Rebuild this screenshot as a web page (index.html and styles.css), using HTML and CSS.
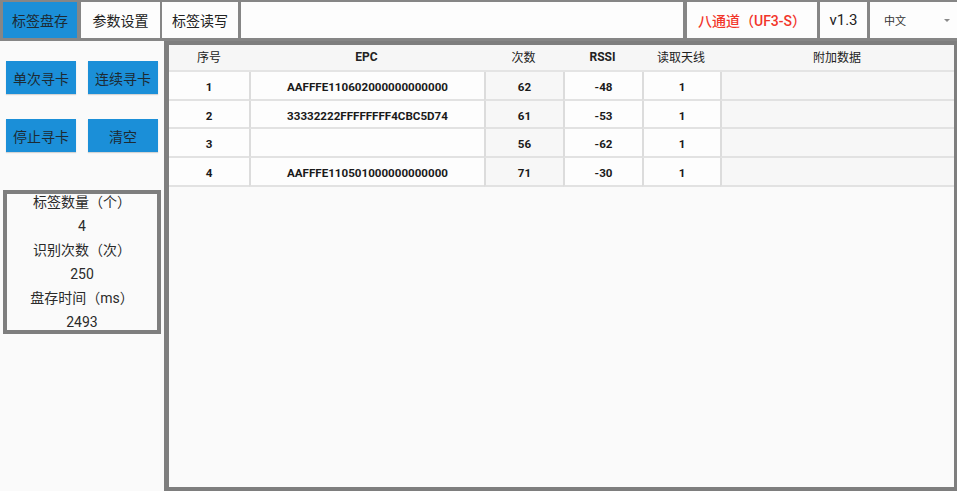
FILE: index.html
```html
<!DOCTYPE html>
<html lang="zh">
<head>
<meta charset="utf-8">
<link rel="stylesheet" href="styles.css">
</head>
<body>
<div class="topbar">
  <div class="tab tab-active t1">标签盘存</div>
  <div class="tab t2">参数设置</div>
  <div class="tab t3">标签读写</div>
  <div class="tab blank"></div>
  <div class="tab chan">八通道（UF3-S）</div>
  <div class="tab ver">v1.3</div>
  <div class="tab lang"><span class="lang-text">中文</span><span class="caret"></span></div>
</div>
<div class="main">
  <div class="side">
    <div class="btns">
      <div class="btn">单次寻卡</div>
      <div class="btn">连续寻卡</div>
      <div class="btn">停止寻卡</div>
      <div class="btn">清空</div>
    </div>
    <div class="stats">
      <div class="stats-inner">
        <div class="line">标签数量（个）</div>
        <div class="line num">4</div>
        <div class="line">识别次数（次）</div>
        <div class="line num">250</div>
        <div class="line">盘存时间（ms）</div>
        <div class="line num">2493</div>
      </div>
    </div>
  </div>
  <div class="tablebox">
    <div class="grid">
      <div class="h">序号</div>
      <div class="h b">EPC</div>
      <div class="h">次数</div>
      <div class="h b">RSSI</div>
      <div class="h">读取天线</div>
      <div class="h">附加数据</div>

      <div class="c">1</div><div class="c s">AAFFFE110602000000000000</div><div class="c s g">62</div><div class="c s">-48</div><div class="c s">1</div><div class="c s g"></div>
      <div class="c">2</div><div class="c s">33332222FFFFFFFF4CBC5D74</div><div class="c s g">61</div><div class="c s">-53</div><div class="c s">1</div><div class="c s g"></div>
      <div class="c">3</div><div class="c s"></div><div class="c s g">56</div><div class="c s">-62</div><div class="c s">1</div><div class="c s g"></div>
      <div class="c">4</div><div class="c s">AAFFFE110501000000000000</div><div class="c s g">71</div><div class="c s">-30</div><div class="c s">1</div><div class="c s g"></div>
    </div>
  </div>
</div>
</body>
</html>
```
FILE: styles.css
```css
* { box-sizing: border-box; }
html, body { margin: 0; padding: 0; }
body {
  width: 957px;
  height: 491px;
  overflow: hidden;
  background: #fafafa;
  font-family: Roboto, "Noto Sans CJK SC", sans-serif;
  color: #222;
}
.topbar {
  display: flex;
  height: 41px;
  padding-top: 2px;
  padding-bottom: 3px;
  background: #868686;
}
.tab {
  background: #fdfdfd;
  display: flex;
  align-items: center;
  justify-content: center;
  font-size: 14px;
  font-family: "Noto Sans CJK SC", sans-serif;
  color: #222;
}
.tab-active { background: #1b8fd8; color: #1d2a33; }
.t1 { margin-left: 3px; width: 74px; }
.t2 { margin-left: 4px; width: 79px; }
.t3 { margin-left: 2px; width: 76px; }
.blank { margin-left: 3px; flex: 1; }
.chan { margin-left: 4px; width: 130px; color: #f2352a; font-weight: 500; font-family: Roboto, "Noto Sans CJK SC", sans-serif; }
.ver { margin-left: 3px; width: 47px; font-family: Roboto, sans-serif; font-size: 15px; }
.lang { margin-left: 3px; width: 87px; justify-content: flex-start; padding-left: 14px; }
.lang-text { font-size: 11px; color: #333; }
.caret {
  margin-left: 38px;
  width: 0; height: 0;
  border-left: 3px solid transparent;
  border-right: 3px solid transparent;
  border-top: 3px solid #8a8a8a;
}
.main {
  display: flex;
  height: 450px;
}
.side {
  width: 164px;
  flex: none;
  background: #fafafa;
  padding-top: 20px;
}
.btns {
  display: grid;
  grid-template-columns: 70px 70px;
  column-gap: 12px;
  row-gap: 25px;
  padding-left: 6px;
}
.btn {
  height: 33px;
  background: #1b8fd8;
  color: #1d2a33;
  font-family: "Noto Sans CJK SC", sans-serif;
  font-size: 14px;
  display: flex;
  align-items: center;
  justify-content: center;
  box-shadow: 0 1px 1px rgba(0,0,0,0.15);
}
.stats {
  margin: 38px 0 0 3px;
  width: 158px;
  height: 144px;
  border: 4px solid #7e7e7e;
  overflow: hidden;
  background: #fafafa;
}
.stats-inner { margin-top: -4px; }
.line {
  height: 24px;
  line-height: 24px;
  text-align: center;
  font-size: 14px;
  color: #2a2a2a;
  font-family: Roboto, "Noto Sans CJK SC", sans-serif;
}
.tablebox {
  flex: 1;
  border: 4px solid #7e7e7e;
  border-left-width: 5px;
  border-right-width: 3px;
  background: #fafafa;
}
.grid {
  display: grid;
  grid-template-columns: 80px 235px 79px 79px 78px 1fr;
  grid-template-rows: 27px repeat(4, 28.7px);
}
.h {
  background: #f6f6f6;
  display: flex;
  align-items: center;
  justify-content: center;
  font-size: 12px;
  color: #222;
  font-family: "Noto Sans CJK SC", sans-serif;
  border-bottom: 2px solid #e4e4e4;
  padding-bottom: 2px;
}
.h.b { font-family: Roboto, sans-serif; font-weight: 700; }
.c {
  background: #fdfdfd;
  display: flex;
  align-items: center;
  justify-content: center;
  font-size: 11.6px;
  font-weight: 700;
  color: #1a1a1a;
  border-bottom: 2px solid #e2e2e2;
  padding-top: 3px;
}
.c.s { border-left: 2px solid #dcdcdc; }
.c.g { background: #f7f7f7; }
```
